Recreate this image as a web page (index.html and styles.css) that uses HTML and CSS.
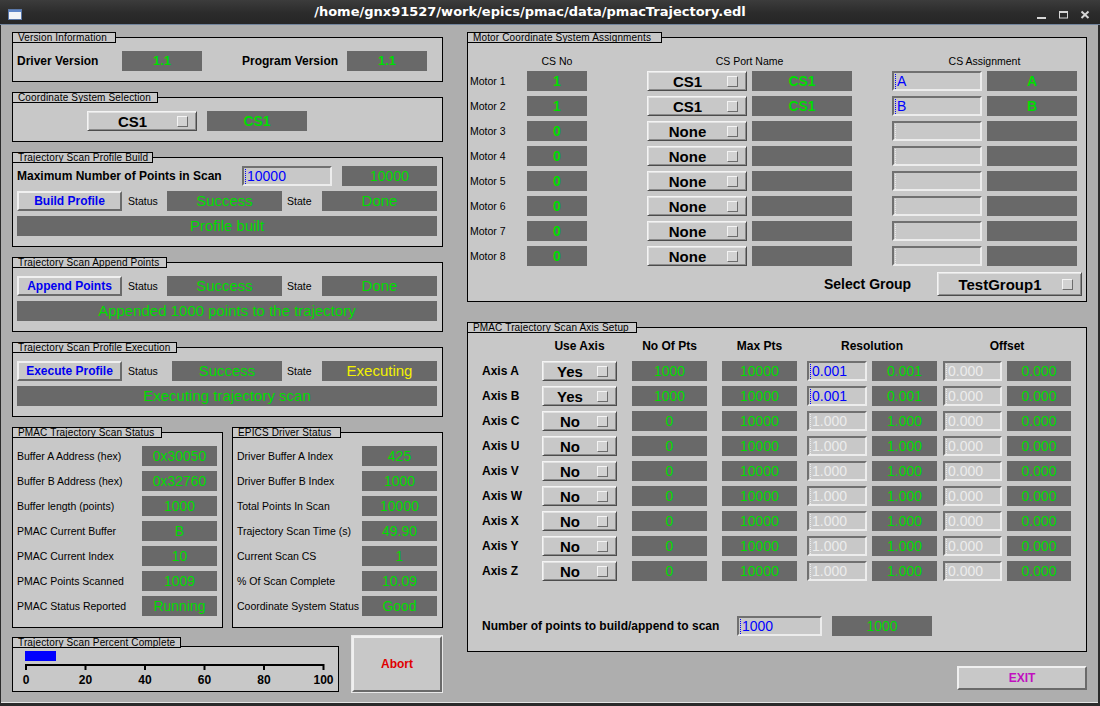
FILE: index.html
```html
<!DOCTYPE html>
<html>
<head>
<meta charset="utf-8">
<title>pmacTrajectory.edl</title>
<link rel="stylesheet" href="styles.css">
</head>
<body>
<div class="window">
  <header class="titlebar">
    <div class="tb-icon">
      <svg width="14" height="11" viewBox="0 0 14 11"><rect x="0.5" y="0.5" width="13" height="10" fill="#f2f4f8" stroke="#5b78a8"/><rect x="1" y="1" width="12" height="2" fill="#5f86c8"/></svg>
    </div>
    <div class="tb-title">/home/gnx91527/work/epics/pmac/data/pmacTrajectory.edl</div>
    <div class="tb-buttons">
      <svg width="70" height="24" viewBox="0 0 70 24">
        <rect x="7" y="17" width="9" height="2" fill="#d6d6d6"/>
        <rect x="29.5" y="11.5" width="8" height="6.5" fill="none" stroke="#d6d6d6"/>
        <rect x="29" y="11" width="9" height="2" fill="#d6d6d6"/>
        <path d="M51.5 11.5 L58.5 18 M58.5 11.5 L51.5 18" stroke="#d6d6d6" stroke-width="2"/>
      </svg>
    </div>
  </header>

  <main class="content">
    <div class="col col-left">

      <section class="group">
        <div class="glabel gl-version">Version Information</div>
        <div class="gbox gb-version">
          <div class="row">
            <span class="tb w105">Driver Version</span>
            <div class="disp b v13 w80">1.1</div>
            <span class="tb w105 ml40">Program Version</span>
            <div class="disp b v13 w80">1.1</div>
          </div>
        </div>
      </section>

      <section class="group">
        <div class="glabel gl-cssel">Coordinate System Selection</div>
        <div class="gbox gb-cssel">
          <div class="row">
            <div class="menu w110"><span>CS1</span><i></i></div>
            <div class="disp b w100 ml10">CS1</div>
          </div>
        </div>
      </section>

      <section class="group">
        <div class="glabel gl-build">Trajectory Scan Profile Build</div>
        <div class="gbox gb-build">
          <div class="row">
            <span class="tb w225">Maximum Number of Points in Scan</span>
            <div class="inp w90">10000</div>
            <div class="disp w95 ml10">10000</div>
          </div>
          <div class="row">
            <div class="btn w105">Build Profile</div>
            <span class="t w45 pl6">Status</span>
            <div class="disp big w115">Success</div>
            <span class="t w40 pl5">State</span>
            <div class="disp big w115">Done</div>
          </div>
          <div class="row">
            <div class="disp big w420">Profile built</div>
          </div>
        </div>
      </section>

      <section class="group">
        <div class="glabel gl-append">Trajectory Scan Append Points</div>
        <div class="gbox gb-exec">
          <div class="row">
            <div class="btn w105">Append Points</div>
            <span class="t w45 pl6">Status</span>
            <div class="disp big w115">Success</div>
            <span class="t w40 pl5">State</span>
            <div class="disp big w115">Done</div>
          </div>
          <div class="row">
            <div class="disp big w420">Appended 1000 points to the trajectory</div>
          </div>
        </div>
      </section>

      <section class="group">
        <div class="glabel gl-exec">Trajectory Scan Profile Execution</div>
        <div class="gbox gb-exec">
          <div class="row">
            <div class="btn w105">Execute Profile</div>
            <span class="t w50 pl6">Status</span>
            <div class="disp big w110">Success</div>
            <span class="t w40 pl5">State</span>
            <div class="disp big yellow w115">Executing</div>
          </div>
          <div class="row">
            <div class="disp big w420">Executing trajectory scan</div>
          </div>
        </div>
      </section>

      <div class="pair">
        <section class="group w211">
          <div class="glabel gl-pmac">PMAC Trajectory Scan Status</div>
          <div class="gbox gb-status">
            <div class="row"><span class="t w125">Buffer A Address (hex)</span><div class="disp w75">0x30050</div></div>
            <div class="row"><span class="t w125">Buffer B Address (hex)</span><div class="disp w75">0x32760</div></div>
            <div class="row"><span class="t w125">Buffer length (points)</span><div class="disp w75">1000</div></div>
            <div class="row"><span class="t w125">PMAC Current Buffer</span><div class="disp w75">B</div></div>
            <div class="row"><span class="t w125">PMAC Current Index</span><div class="disp w75">10</div></div>
            <div class="row"><span class="t w125">PMAC Points Scanned</span><div class="disp w75">1009</div></div>
            <div class="row"><span class="t w125">PMAC Status Reported</span><div class="disp w75">Running</div></div>
          </div>
        </section>
        <section class="group w211">
          <div class="glabel gl-epics">EPICS Driver Status</div>
          <div class="gbox gb-status">
            <div class="row"><span class="t w125">Driver Buffer A Index</span><div class="disp w75">425</div></div>
            <div class="row"><span class="t w125">Driver Buffer B Index</span><div class="disp w75">1000</div></div>
            <div class="row"><span class="t w125">Total Points In Scan</span><div class="disp w75">10000</div></div>
            <div class="row"><span class="t w125">Trajectory Scan Time (s)</span><div class="disp w75">49.90</div></div>
            <div class="row"><span class="t w125">Current Scan CS</span><div class="disp w75">1</div></div>
            <div class="row"><span class="t w125">% Of Scan Complete</span><div class="disp w75">10.09</div></div>
            <div class="row"><span class="t w125">Coordinate System Status</span><div class="disp w75">Good</div></div>
          </div>
        </section>
      </div>

      <div class="bottom-row">
        <section class="group w327">
          <div class="glabel gl-percent">Trajectory Scan Percent Complete</div>
          <div class="gbox gb-percent">
            <svg class="scale" width="325" height="44" viewBox="0 0 325 44">
              <rect x="12" y="4" width="31" height="10" fill="#0000ff"/>
              <path d="M12 18 H311.5 M13 17 V23 M72.5 17 V23 M132 17 V23 M191.5 17 V23 M251 17 V23 M310.5 17 V23" stroke="#000" stroke-width="2" fill="none"/>
              <g class="scale-num">
                <text x="13" y="36.5">0</text>
                <text x="72.5" y="36.5">20</text>
                <text x="132" y="36.5">40</text>
                <text x="191.5" y="36.5">60</text>
                <text x="251" y="36.5">80</text>
                <text x="310.5" y="36.5">100</text>
              </g>
            </svg>
          </div>
        </section>
        <div class="btn abort">Abort</div>
      </div>
    </div>

    <div class="col col-right">
      <section class="group">
        <div class="glabel gl-motor">Motor Coordinate System Assignments</div>
        <div class="gbox gb-motor">
          <div class="row">
            <span class="w57"></span>
            <span class="t tc w60">CS No</span>
            <span class="t tc w205 ml60">CS Port Name</span>
            <span class="t tc w185 ml40">CS Assignment</span>
          </div>
          <div class="stack">
            <div class="row"><span class="t w57">Motor 1</span><div class="disp b w60">1</div><div class="menu w100 ml60"><span>CS1</span><i></i></div><div class="disp b w100 ml5">CS1</div><div class="inp w90 ml40">A</div><div class="disp b w90 ml5">A</div></div>
            <div class="row"><span class="t w57">Motor 2</span><div class="disp b w60">1</div><div class="menu w100 ml60"><span>CS1</span><i></i></div><div class="disp b w100 ml5">CS1</div><div class="inp w90 ml40">B</div><div class="disp b w90 ml5">B</div></div>
            <div class="row"><span class="t w57">Motor 3</span><div class="disp b w60">0</div><div class="menu w100 ml60"><span>None</span><i></i></div><div class="disp b w100 ml5"></div><div class="inp dim w90 ml40"></div><div class="disp b w90 ml5"></div></div>
            <div class="row"><span class="t w57">Motor 4</span><div class="disp b w60">0</div><div class="menu w100 ml60"><span>None</span><i></i></div><div class="disp b w100 ml5"></div><div class="inp dim w90 ml40"></div><div class="disp b w90 ml5"></div></div>
            <div class="row"><span class="t w57">Motor 5</span><div class="disp b w60">0</div><div class="menu w100 ml60"><span>None</span><i></i></div><div class="disp b w100 ml5"></div><div class="inp dim w90 ml40"></div><div class="disp b w90 ml5"></div></div>
            <div class="row"><span class="t w57">Motor 6</span><div class="disp b w60">0</div><div class="menu w100 ml60"><span>None</span><i></i></div><div class="disp b w100 ml5"></div><div class="inp dim w90 ml40"></div><div class="disp b w90 ml5"></div></div>
            <div class="row"><span class="t w57">Motor 7</span><div class="disp b w60">0</div><div class="menu w100 ml60"><span>None</span><i></i></div><div class="disp b w100 ml5"></div><div class="inp dim w90 ml40"></div><div class="disp b w90 ml5"></div></div>
            <div class="row"><span class="t w57">Motor 8</span><div class="disp b w60">0</div><div class="menu w100 ml60"><span>None</span><i></i></div><div class="disp b w100 ml5"></div><div class="inp dim w90 ml40"></div><div class="disp b w90 ml5"></div></div>
            <div class="row row-select">
              <span class="tb t14 w113 ml354">Select Group</span>
              <div class="menu tall w145"><span>TestGroup1</span><i></i></div>
            </div>
          </div>
        </div>
      </section>

      <section class="group mt20">
        <div class="glabel gl-axis">PMAC Trajectory Scan Axis Setup</div>
        <div class="gbox gb-axis">
          <div class="row">
            <span class="w60"></span>
            <span class="tb tc w75">Use Axis</span>
            <span class="tb tc w75 ml15">No Of Pts</span>
            <span class="tb tc w75 ml15">Max Pts</span>
            <span class="tb tc w130 ml10">Resolution</span>
            <span class="tb tc w128 ml6">Offset</span>
          </div>
          <div class="row"><span class="tb w60">Axis A</span><div class="menu w75"><span>Yes</span><i></i></div><div class="disp w75 ml15">1000</div><div class="disp w75 ml15">10000</div><div class="inp w60 ml10">0.001</div><div class="disp w65 ml5">0.001</div><div class="inp dim w59 ml6">0.000</div><div class="disp w64 ml5">0.000</div></div>
          <div class="row"><span class="tb w60">Axis B</span><div class="menu w75"><span>Yes</span><i></i></div><div class="disp w75 ml15">1000</div><div class="disp w75 ml15">10000</div><div class="inp w60 ml10">0.001</div><div class="disp w65 ml5">0.001</div><div class="inp dim w59 ml6">0.000</div><div class="disp w64 ml5">0.000</div></div>
          <div class="row"><span class="tb w60">Axis C</span><div class="menu w75"><span>No</span><i></i></div><div class="disp w75 ml15">0</div><div class="disp w75 ml15">10000</div><div class="inp dim w60 ml10">1.000</div><div class="disp w65 ml5">1.000</div><div class="inp dim w59 ml6">0.000</div><div class="disp w64 ml5">0.000</div></div>
          <div class="row"><span class="tb w60">Axis U</span><div class="menu w75"><span>No</span><i></i></div><div class="disp w75 ml15">0</div><div class="disp w75 ml15">10000</div><div class="inp dim w60 ml10">1.000</div><div class="disp w65 ml5">1.000</div><div class="inp dim w59 ml6">0.000</div><div class="disp w64 ml5">0.000</div></div>
          <div class="row"><span class="tb w60">Axis V</span><div class="menu w75"><span>No</span><i></i></div><div class="disp w75 ml15">0</div><div class="disp w75 ml15">10000</div><div class="inp dim w60 ml10">1.000</div><div class="disp w65 ml5">1.000</div><div class="inp dim w59 ml6">0.000</div><div class="disp w64 ml5">0.000</div></div>
          <div class="row"><span class="tb w60">Axis W</span><div class="menu w75"><span>No</span><i></i></div><div class="disp w75 ml15">0</div><div class="disp w75 ml15">10000</div><div class="inp dim w60 ml10">1.000</div><div class="disp w65 ml5">1.000</div><div class="inp dim w59 ml6">0.000</div><div class="disp w64 ml5">0.000</div></div>
          <div class="row"><span class="tb w60">Axis X</span><div class="menu w75"><span>No</span><i></i></div><div class="disp w75 ml15">0</div><div class="disp w75 ml15">10000</div><div class="inp dim w60 ml10">1.000</div><div class="disp w65 ml5">1.000</div><div class="inp dim w59 ml6">0.000</div><div class="disp w64 ml5">0.000</div></div>
          <div class="row"><span class="tb w60">Axis Y</span><div class="menu w75"><span>No</span><i></i></div><div class="disp w75 ml15">0</div><div class="disp w75 ml15">10000</div><div class="inp dim w60 ml10">1.000</div><div class="disp w65 ml5">1.000</div><div class="inp dim w59 ml6">0.000</div><div class="disp w64 ml5">0.000</div></div>
          <div class="row"><span class="tb w60">Axis Z</span><div class="menu w75"><span>No</span><i></i></div><div class="disp w75 ml15">0</div><div class="disp w75 ml15">10000</div><div class="inp dim w60 ml10">1.000</div><div class="disp w65 ml5">1.000</div><div class="inp dim w59 ml6">0.000</div><div class="disp w64 ml5">0.000</div></div>
          <div class="row row-npts">
            <span class="tb w255">Number of points to build/append to scan</span>
            <div class="inp w85">1000</div>
            <div class="disp w100 ml10">1000</div>
          </div>
        </div>
      </section>

      <div class="btn exit">EXIT</div>
    </div>
  </main>
</div>
</body>
</html>
```

FILE: styles.css
```css
* { box-sizing: border-box; }
html, body { margin: 0; padding: 0; background: #2b2b2b; }
body { font-family: "Liberation Sans", Arial, sans-serif; color: #000; }

.window { width: 1100px; height: 706px; display: flex; flex-direction: column; background: #2b2b2b; overflow: hidden; }

/* title bar */
.titlebar { height: 25px; flex: none; display: flex; align-items: center; background: linear-gradient(#3c3c3c, #2b2b2b 55%, #262626); border-bottom: 1px solid #72849c; }
.tb-icon { align-self: stretch; width: 30px; padding: 9px 0 0 8px; }
.tb-icon svg, .tb-buttons svg { display: block; }
.tb-title { flex: 1; text-align: center; color: #fff; font: bold 13px "DejaVu Sans", sans-serif; line-height: 24px; white-space: nowrap; }
.tb-buttons { width: 70px; align-self: stretch; }

/* body */
.content { flex: 1; margin: 0 2px 3px 1px; background: #aeaeae; border-bottom: 1px solid #e6e6e6; padding: 7px 0 0 11px; display: flex; gap: 24px; }
.col { display: flex; flex-direction: column; }
.col-left { width: 431px; gap: 10px; }
.col-right { width: 620px; }

/* group boxes */
.group { display: flex; flex-direction: column; align-items: flex-start; }
.glabel { position: relative; z-index: 1; height: 11px; border: 1px solid #000; background: #c8c8c8; font-size: 10px; letter-spacing: 0.15px; line-height: 9px; padding-left: 5px; white-space: nowrap; }
.gbox { align-self: stretch; margin-top: -6px; border: 1px solid #000; background: #c8c8c8; display: flex; flex-direction: column; gap: 5px; }

.gl-version { width: 104px; }
.gl-cssel { width: 146px; }
.gl-build { width: 141px; }
.gl-append { width: 155px; }
.gl-exec { width: 165px; }
.gl-pmac { width: 150px; }
.gl-epics { width: 109px; }
.gl-percent { width: 169px; }
.gl-motor { width: 195px; }
.gl-axis { width: 170px; }

.gb-version { height: 45px; padding: 13px 0 0 4px; }
.gb-cssel { height: 45px; padding: 13px 0 0 74px; }
.gb-build { height: 90px; padding: 8px 0 0 4px; }
.gb-exec { height: 70px; padding: 13px 0 0 4px; }
.gb-status { height: 196px; padding: 13px 0 0 4px; }
.gb-percent { height: 46px; margin-top: -2px; padding: 0; display: block; }
.gb-motor { height: 265px; padding: 13px 0 0 2px; gap: 0; }
.gb-axis { height: 325px; padding: 8px 0 0 14px; }

.pair { display: flex; gap: 9px; }
.bottom-row { display: flex; gap: 13px; align-items: flex-start; margin-top: -1px; }
.stack { display: flex; flex-direction: column; gap: 5px; }
.row { display: flex; align-items: center; height: 20px; flex: none; }
.row-select { height: 24px; margin-top: 1px; }
.row-npts { margin-top: 30px; }
.mt20 { margin-top: 20px; }

/* text */
.t { font-size: 10.5px; white-space: nowrap; flex: none; }
.tb { font-size: 12px; font-weight: bold; white-space: nowrap; flex: none; }
.t14 { font-size: 14px; }
.tc { text-align: center; }

/* widgets */
.disp { height: 20px; background: #696969; color: #00dc00; text-align: center; font-size: 14px; line-height: 20px; white-space: nowrap; flex: none; overflow: hidden; }
.disp.b { font-weight: bold; }
.disp.v13 { font-size: 13px; }
.disp.big { font-size: 15px; }
.disp.yellow { color: #f2f200; }

.menu { height: 20px; display: flex; align-items: center; background: #c8c8c8; border: 1px solid; border-color: #f4f4f4 #4c4c4c #4c4c4c #f4f4f4; box-shadow: inset 1px 1px #e2e2e2, inset -1px -1px #8a8a8a; font-weight: bold; font-size: 15px; padding-right: 8px; flex: none; }
.menu span { flex: 1; text-align: center; line-height: 16px; padding-top: 2px; white-space: nowrap; }
.menu i { width: 11px; height: 11px; border: 1px solid; border-color: #f4f4f4 #6c6c6c #6c6c6c #f4f4f4; background: #d2d2d2; }
.menu.tall { height: 24px; }

.inp { height: 20px; display: flex; align-items: center; background: #c8c8c8; border: 2px solid; border-color: #707070 #ececec #ececec #707070; color: #0000ff; font-size: 14px; padding-left: 1px; white-space: nowrap; flex: none; overflow: hidden; }
.inp::before { content: ""; height: 15px; border-left: 1px dotted currentColor; margin-right: 1px; }
.inp.dim { color: #ececec; }

.btn { height: 20px; display: flex; align-items: center; justify-content: center; background: #c8c8c8; border: 2px solid; border-color: #f0f0f0 #6a6a6a #6a6a6a #f0f0f0; font-weight: bold; font-size: 12px; color: #0000f0; white-space: nowrap; flex: none; }
.abort { width: 90px; height: 56px; margin-top: -1px; color: #e00000; box-shadow: 0 0 0 1px #e8e8e8; }
.exit { width: 130px; height: 24px; margin-top: 14px; align-self: flex-end; color: #c010c0; }

.scale { display: block; }
.scale-num text { font: bold 12px "Liberation Sans", Arial, sans-serif; text-anchor: middle; fill: #000; }

/* sizes */
.w40 { width: 40px; } .w45 { width: 45px; } .w50 { width: 50px; } .w57 { width: 57px; }
.w59 { width: 59px; } .w60 { width: 60px; } .w64 { width: 64px; } .w65 { width: 65px; }
.w75 { width: 75px; } .w80 { width: 80px; } .w85 { width: 85px; } .w90 { width: 90px; }
.w95 { width: 95px; } .w100 { width: 100px; } .w105 { width: 105px; } .w110 { width: 110px; }
.w113 { width: 113px; } .w115 { width: 115px; } .w125 { width: 125px; } .w128 { width: 128px; }
.w130 { width: 130px; } .w145 { width: 145px; } .w185 { width: 185px; } .w205 { width: 205px; }
.w211 { width: 211px; } .w225 { width: 225px; } .w255 { width: 255px; } .w327 { width: 327px; }
.w420 { width: 420px; }
.ml5 { margin-left: 5px; } .ml6 { margin-left: 6px; } .ml10 { margin-left: 10px; } .ml15 { margin-left: 15px; }
.ml40 { margin-left: 40px; } .ml60 { margin-left: 60px; } .ml354 { margin-left: 354px; }
.pl5 { padding-left: 5px; } .pl6 { padding-left: 6px; }
```
